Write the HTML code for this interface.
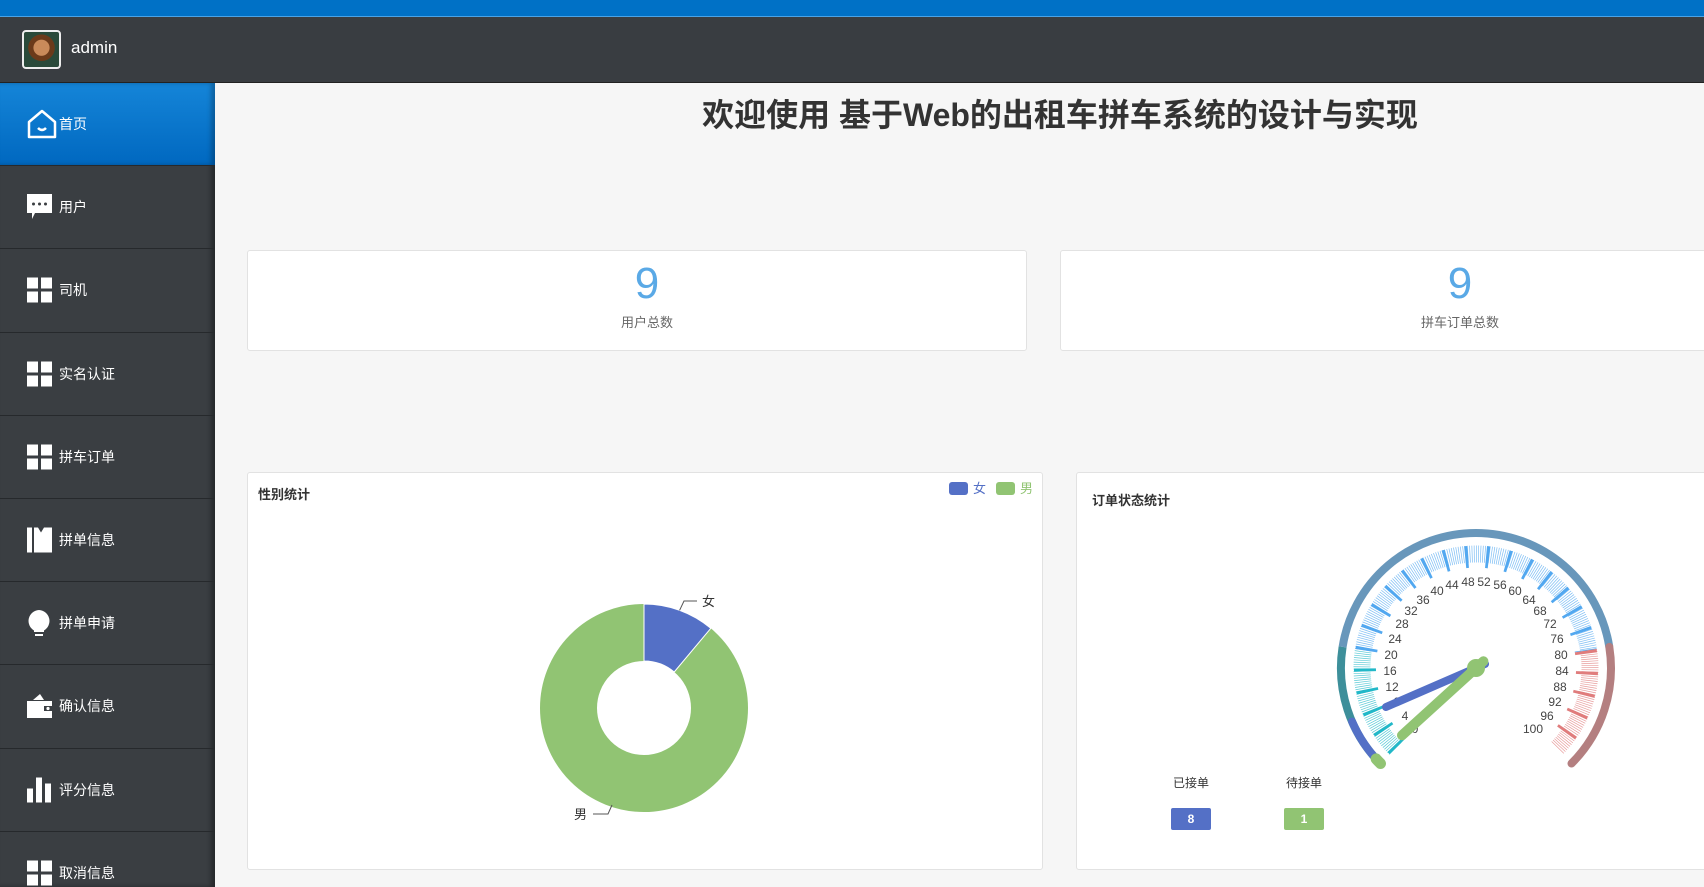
<!DOCTYPE html>
<html><head><meta charset="utf-8"><style>
*{margin:0;padding:0;box-sizing:border-box}
body{width:1704px;height:887px;overflow:hidden;background:#f6f6f6;font-family:"Liberation Sans","Noto Sans CJK SC",sans-serif;position:relative}
.top{position:absolute;left:0;top:0;width:1704px;height:17px;background:#0071c6;border-bottom:1px solid #4aa3e6}
.hdr{position:absolute;left:0;top:17px;width:1704px;height:66px;background:#393d41;border-bottom:1px solid #222}
.av{position:absolute;left:22px;top:13px;width:39px;height:39px;border:2px solid #eee;border-radius:4px;background:radial-gradient(circle at 50% 45%,#c98a5a 0 30%,#6b3a1a 32% 50%,#2a4a3a 52%);overflow:hidden}
.hdr .nm{position:absolute;left:71px;top:21px;color:#fff;font-size:17px}
.side{position:absolute;left:0;top:83px;width:215px;height:804px;background:#3a3e42;box-shadow:inset -4px 0 5px rgba(0,0,0,.35);overflow:hidden}
.it{height:83.2px;border-bottom:1px solid #26292c;position:relative;color:#fff;font-size:14px}
.it.act{background:linear-gradient(#1585d8,#0068c0);box-shadow:inset -4px 0 5px rgba(0,0,0,.25)}
.it span{position:absolute;left:59px;top:50%;transform:translateY(-50%)}
.it svg{position:absolute;left:27px;top:50%;transform:translateY(-50%)}
.title{position:absolute;left:215px;width:1690px;top:90px;text-align:center;font-size:32px;font-weight:bold;color:#333}
.card{position:absolute;background:#fff;border:1px solid #e2e2e2;border-radius:3px}
.num{position:absolute;width:100%;text-align:center;top:8px;font-size:44px;color:#5aa9e6;padding-left:20px}
.lbl{position:absolute;width:100%;text-align:center;top:61px;font-size:13px;color:#666;padding-left:20px}
.ct{position:absolute;font-size:13px;color:#333;font-weight:bold}
</style></head><body>
<div class="top"></div>
<div class="hdr"><div class="av"></div><div class="nm">admin</div></div>
<div class="side">
<div class="it act"><svg width="30" height="32" viewBox="0 0 30 32"><path d="M2 14 L15 3 L28 14 V29 H2 Z" fill="none" stroke="#fff" stroke-width="2.5" stroke-linejoin="round"/><path d="M11 20 Q15 24 19 20" fill="none" stroke="#fff" stroke-width="2.5"/></svg><span>首页</span></div>
<div class="it"><svg width="25" height="26" viewBox="0 0 25 26"><path d="M0 0H25V19H8L5 25V19H0Z" fill="#fff"/><circle cx="6.5" cy="10" r="1.5" fill="#3a3e42"/><circle cx="12.5" cy="10" r="1.5" fill="#3a3e42"/><circle cx="18.5" cy="10" r="1.5" fill="#3a3e42"/></svg><span>用户</span></div>
<div class="it"><svg width="25" height="25"><rect width="11" height="11" fill="#fff"/><rect x="14" width="11" height="11" fill="#fff"/><rect y="14" width="11" height="11" fill="#fff"/><rect x="14" y="14" width="11" height="11" fill="#fff"/></svg><span>司机</span></div>
<div class="it"><svg width="25" height="25"><rect width="11" height="11" fill="#fff"/><rect x="14" width="11" height="11" fill="#fff"/><rect y="14" width="11" height="11" fill="#fff"/><rect x="14" y="14" width="11" height="11" fill="#fff"/></svg><span>实名认证</span></div>
<div class="it"><svg width="25" height="25"><rect width="11" height="11" fill="#fff"/><rect x="14" width="11" height="11" fill="#fff"/><rect y="14" width="11" height="11" fill="#fff"/><rect x="14" y="14" width="11" height="11" fill="#fff"/></svg><span>拼车订单</span></div>
<div class="it"><svg width="25" height="25"><rect width="5" height="25" fill="#fff"/><path d="M7 0H11L14 5L17 0H25V25H7Z" fill="#fff"/></svg><span>拼单信息</span></div>
<div class="it"><svg width="24" height="28" viewBox="0 0 24 28"><path d="M12 1A11 11 0 0 1 17 21.5V23H7V21.5A11 11 0 0 1 12 1Z" fill="#fff"/><rect x="8" y="25" width="8" height="2" fill="#fff"/></svg><span>拼单申请</span></div>
<div class="it"><svg width="25" height="24" viewBox="0 0 25 24"><path d="M6 6L13 0L17 6Z" fill="#fff"/><path d="M0 7H25V12H17V17H25V24H0Z" fill="#fff"/><circle cx="21" cy="14.5" r="1.6" fill="#fff"/></svg><span>确认信息</span></div>
<div class="it"><svg width="25" height="25"><rect y="11" width="6" height="14" fill="#fff"/><rect x="9" y="0" width="6" height="25" fill="#fff"/><rect x="18" y="6" width="6" height="19" fill="#fff"/></svg><span>评分信息</span></div>
<div class="it"><svg width="25" height="25"><rect width="11" height="11" fill="#fff"/><rect x="14" width="11" height="11" fill="#fff"/><rect y="14" width="11" height="11" fill="#fff"/><rect x="14" y="14" width="11" height="11" fill="#fff"/></svg><span>取消信息</span></div>
</div>
<div class="title">欢迎使用 基于Web的出租车拼车系统的设计与实现</div>
<div class="card" style="left:247px;top:250px;width:780px;height:101px"><div class="num">9</div><div class="lbl">用户总数</div></div>
<div class="card" style="left:1060px;top:250px;width:780px;height:101px"><div class="num">9</div><div class="lbl">拼车订单总数</div></div>
<div class="card" style="left:247px;top:472px;width:796px;height:398px"></div>
<div class="card" style="left:1076px;top:472px;width:796px;height:398px"></div>
<div class="ct" style="left:258px;top:484px">性别统计</div>
<div class="ct" style="left:1092px;top:490px">订单状态统计</div>
<svg style="position:absolute;left:0;top:0" width="1704" height="887" font-family="Liberation Sans, Noto Sans CJK SC, sans-serif">
<rect x="949" y="482" width="19" height="13" rx="3" fill="#5470c6"/><text x="973" y="493" font-size="13" fill="#5470c6">女</text>
<rect x="996" y="482" width="19" height="13" rx="3" fill="#91c473"/><text x="1020" y="493" font-size="13" fill="#91c473">男</text>
<circle cx="644" cy="708" r="75.5" fill="none" stroke="#91c473" stroke-width="57"/>
<path d="M644,604 A104,104 0 0 1 710.8,628.3 L674.2,672 A47,47 0 0 0 644,661 Z" fill="#5470c6" stroke="#fff" stroke-width="1"/>
<path d="M679.6,610.3 L684,601 H697" fill="none" stroke="#555" stroke-width="1"/>
<text x="702" y="606" font-size="13" fill="#333">女</text>
<path d="M612,805 L608,814 H593" fill="none" stroke="#555" stroke-width="1"/>
<text x="574" y="819" font-size="13" fill="#333">男</text>
<path d="M1380.5,763.5 A135,135 0 0 1 1342.6,646.9" fill="none" stroke="#3d8f9a" stroke-width="8"/>
<path d="M1342.6,646.9 A135,135 0 0 1 1609.3,646.9" fill="none" stroke="#6897bb" stroke-width="8"/>
<path d="M1609.3,646.9 A135,135 0 0 1 1571.5,763.5" fill="none" stroke="#b47f80" stroke-width="8" stroke-linecap="round"/>
<path d="M1380.5,763.5 A135,135 0 0 1 1352.1,721.6" fill="none" stroke="#5470c6" stroke-width="8" stroke-linecap="round"/>
<path d="M1380.5,763.5 A135,135 0 0 1 1376.1,758.9" fill="none" stroke="#91c473" stroke-width="11" stroke-linecap="round"/>
<g fill="none" stroke-width="17" stroke-dasharray="0.7 1.449" opacity=".75">
<path d="M1395.4,748.6 A114,114 0 0 1 1363.4,650.2" stroke="#22b8c8"/>
<path d="M1363.4,650.2 A114,114 0 0 1 1588.6,650.2" stroke="#52a8f0"/>
<path d="M1588.6,650.2 A114,114 0 0 1 1556.6,748.6" stroke="#e07c7c"/>
</g>
<g fill="none" stroke-width="22" stroke-dasharray="3 17.92">
<path d="M1397.5,746.5 A111,111 0 0 1 1366.3,650.7" stroke="#22b8c8"/>
<path d="M1366.3,650.7 A111,111 0 0 1 1585.7,650.7" stroke="#52a8f0"/>
<path d="M1585.7,650.7 A111,111 0 0 1 1554.5,746.5" stroke="#e07c7c"/>
</g>
<g font-size="12" fill="#444" text-anchor="middle" dominant-baseline="central">
<text x="1415" y="729">0</text><text x="1405" y="716">4</text><text x="1397" y="702">8</text><text x="1392" y="687">12</text><text x="1390" y="671">16</text><text x="1391" y="655">20</text><text x="1395" y="639">24</text><text x="1402" y="624">28</text><text x="1411" y="611">32</text><text x="1423" y="600">36</text><text x="1437" y="591">40</text><text x="1452" y="585">44</text><text x="1468" y="582">48</text><text x="1484" y="582">52</text><text x="1500" y="585">56</text><text x="1515" y="591">60</text><text x="1529" y="600">64</text><text x="1540" y="611">68</text><text x="1550" y="624">72</text><text x="1557" y="639">76</text><text x="1561" y="655">80</text><text x="1562" y="671">84</text><text x="1560" y="687">88</text><text x="1555" y="702">92</text><text x="1547" y="716">96</text><text x="1533" y="729">100</text>
</g>
<line x1="1485" y1="664" x2="1386" y2="707" stroke="#5470c6" stroke-width="8" stroke-linecap="round"/>
<line x1="1483.4" y1="661.3" x2="1402" y2="735.3" stroke="#91c473" stroke-width="10" stroke-linecap="round"/>
<circle cx="1476" cy="668" r="9" fill="#91c473"/>
<text x="1191" y="787" font-size="12" fill="#333" text-anchor="middle">已接单</text>
<text x="1304" y="787" font-size="12" fill="#333" text-anchor="middle">待接单</text>
<rect x="1171" y="808" width="40" height="22" rx="2" fill="#5470c6"/><text x="1191" y="823" font-size="12" font-weight="bold" fill="#fff" text-anchor="middle">8</text>
<rect x="1284" y="808" width="40" height="22" rx="2" fill="#91c473"/><text x="1304" y="823" font-size="12" font-weight="bold" fill="#fff" text-anchor="middle">1</text>
</svg>
</body></html>
